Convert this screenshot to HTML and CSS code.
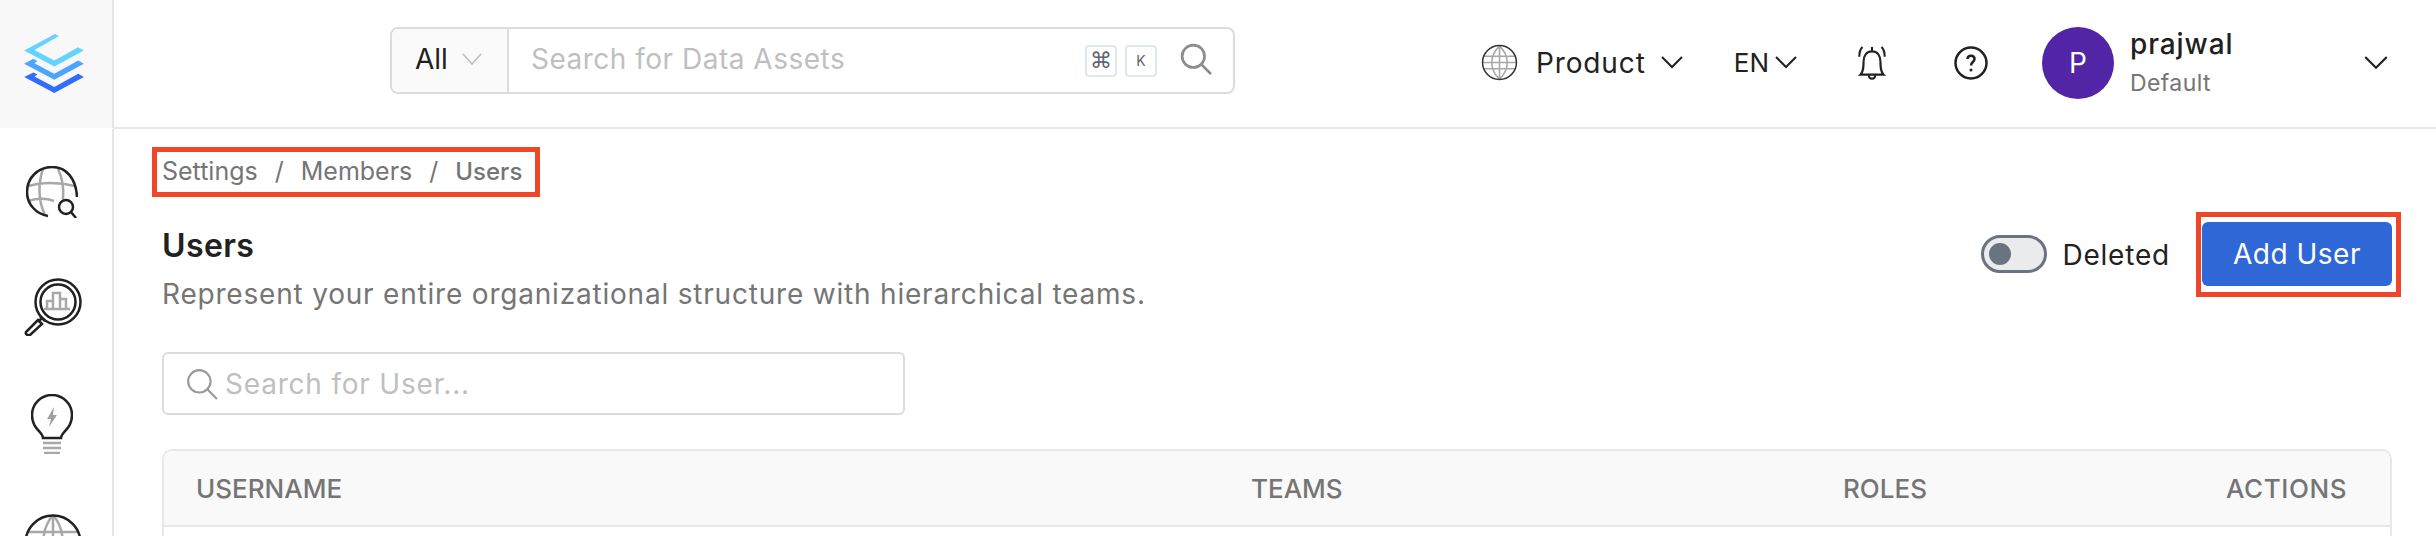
FILE: index.html
```html
<!DOCTYPE html>
<html lang="en">
<head>
    <meta charset="UTF-8">
    <meta name="viewport" content="width=device-width, initial-scale=1.0">
    <title>Users</title>
    <link rel="stylesheet" href="styles.css">
</head>
<body>
<div class="topbar">
    <div class="logo-cell">
        <svg class="logo" viewBox="0 0 180 190">
            <polygon fill="#2e6dff" points="0,130 28,116 40,122 31,128 91,160 163,120 180,130 91,178"/>
            <polygon fill="#4ba5ff" points="0,90 28,75 40,82 31,88 91,120 163,80 180,90 91,138"/>
            <polygon fill="#63d4ff" points="0,50 93,0 105,6 31,48 91,80 163,40 180,50 91,98"/>
        </svg>
    </div>
    <div class="header">
        <div class="global-search">
            <div class="scope">All
                <svg class="chev-thin" viewBox="0 0 20 12"><path d="M1 1l9 10 9-10"/></svg>
            </div>
            <div class="global-input">
                <span class="placeholder">Search for Data Assets</span>
                <span class="key key-cmd">&#8984;</span>
                <span class="key">K</span>
                <svg class="search-icon" viewBox="0 0 30 30"><circle cx="12.5" cy="12.5" r="10.5"/><path d="M20 20l9 9"/></svg>
            </div>
        </div>
        <div class="header-right">
            <div class="domain">
                <svg class="domain-globe" viewBox="0 0 36 36">
                    <g class="grey"><path d="M3 12h30M2 18h32M3 24h30M18 2v32M18 2c-10 9-10 23 0 32M18 2c10 9 10 23 0 32"/></g>
                    <circle cx="18" cy="18" r="16.5"/>
                </svg>
                <span>Product</span>
                <svg class="chev" viewBox="0 0 22 13"><path d="M1 1l10 10 10-10"/></svg>
            </div>
            <div class="lang">
                <span>EN</span>
                <svg class="chev" viewBox="0 0 22 13"><path d="M1 1l10 10 10-10"/></svg>
            </div>
            <svg class="bell" viewBox="0 0 32 34">
                <path d="M5 28c3-3 3-7 3-12 0-6 3-10 8-10s8 4 8 10c0 5 0 9 3 12zM13 28c0 5 6 5 6 0M16 2v4M7 2C5 4 4 7 4 11M25 2c2 2 3 5 3 9"/>
            </svg>
            <svg class="help" viewBox="0 0 34 34">
                <circle cx="17" cy="17" r="15.5"/>
                <path d="M13.500 13c0-4.500 7-4.500 7 0 0 3-3.500 3-3.500 6.500"/>
                <circle class="dot" cx="17" cy="24" r="1.500"/>
            </svg>
            <div class="user">
                <div class="avatar">P</div>
                <div class="user-text">
                    <div class="user-name">prajwal</div>
                    <div class="user-role">Default</div>
                </div>
                <svg class="chev user-chev" viewBox="0 0 22 13"><path d="M1 1l10 10 10-10"/></svg>
            </div>
        </div>
    </div>
</div>

<div class="page">
    <div class="sidebar">
        <svg class="side-icon globe-search" viewBox="0 0 52 52">
            <g class="grey"><path d="M3 20c12-4 30-4 46 0M2 35c10-3 18-3 26 0M17 3c-5 14-5 32 2 46M32 3c4 8 6 18 5 30"/></g>
            <path d="M22 50C10 48 1 38 1 26 1 12 12 1 26 1s24 11 25 30"/>
            <circle cx="40" cy="41" r="7"/>
            <path d="M45 46l5 6"/>
        </svg>
        <svg class="side-icon analytics" viewBox="0 0 58 58">
            <circle cx="34" cy="24" r="22.500"/>
            <circle cx="34" cy="24" r="17.500"/>
            <g class="grey"><path d="M23 31V23h6v8M29 31V15h7v16M36 31V21h6v10M20 31h26"/></g>
            <path d="M18 40l-4 4M16 38l5 5M14 42L2 54c-1 2 2 4 4 3l12-11z"/>
        </svg>
        <svg class="side-icon bulb" viewBox="0 0 42 60">
            <path d="M12 44c0-6-11-9-11-23C1 10 10 1 21 1s20 9 20 20c0 14-11 17-11 23z"/>
            <polygon class="grey-fill" points="23,13 16,25 20,25 18,33 26,21 22,21"/>
            <g class="grey"><path d="M12 49h18M12 54h18M13 59h16"/></g>
        </svg>
        <svg class="side-icon globe" viewBox="0 0 58 58">
            <g class="grey"><path d="M4 18h50M1 32h56M29 1v56M29 1C16 16 16 42 29 57M29 1c13 15 13 41 0 56"/></g>
            <circle cx="29" cy="29" r="27.500"/>
        </svg>
    </div>

    <div class="content">
        <div class="breadcrumb">
            <span>Settings</span><span class="sep">/</span><span>Members</span><span class="sep">/</span><span class="crumb-active">Users</span>
        </div>

        <div class="title-row">
            <div class="title-block">
                <div class="title">Users</div>
                <div class="subtitle">Represent your entire organizational structure with hierarchical teams.</div>
            </div>
            <div class="title-actions">
                <div class="toggle"><div class="knob"></div></div>
                <span class="toggle-label">Deleted</span>
                <div class="add-highlight"><button class="add-btn">Add User</button></div>
            </div>
        </div>

        <div class="user-search">
            <svg class="user-search-icon" viewBox="0 0 30 30"><circle cx="12.500" cy="12.500" r="10.500"/><path d="M20 20l9 9"/></svg>
            <span class="placeholder">Search for User...</span>
        </div>

        <div class="table">
            <div class="table-head">
                <div>USERNAME</div>
                <div>TEAMS</div>
                <div>ROLES</div>
                <div class="head-actions">ACTIONS</div>
            </div>
            <div class="table-body"></div>
        </div>
    </div>
</div>
</body>
</html>
```
FILE: styles.css
```css
* {
    box-sizing: border-box;
}

html, body {
    height: 100%;
}

body {
    margin: 0;
    overflow: hidden;
    background-color: #fff;
    color: #212121;
    font-family: 'Inter', 'Open Sans', sans-serif;
    font-size: 28px;
}

svg {
    display: block;
    flex: none;
    fill: none;
}

/* Top bar */
.topbar {
    display: flex;
    height: 129px;
}

.logo-cell {
    width: 114px;
    height: 128px;
    flex: none;
    display: flex;
    padding: 34px 0 0 24px;
    background-color: #f8f8f8;
    border-right: 2px solid #e6e6e6;
}

.logo {
    width: 60px;
    height: 63px;
}

.header {
    flex: 1;
    display: flex;
    align-items: center;
    padding: 0 48px 6px 276px;
    border-bottom: 2px solid #e6e6e6;
}

.global-search {
    display: flex;
    width: 845px;
    height: 67px;
    border: 2px solid #dcdcdc;
    border-radius: 8px;
    overflow: hidden;
}

.scope {
    width: 117px;
    display: flex;
    align-items: center;
    gap: 14px;
    padding: 0 0 3px 23px;
    background-color: #fafafa;
    border-right: 2px solid #dcdcdc;
}

.chev-thin {
    width: 20px;
    height: 12px;
    stroke: #bdbdbd;
    stroke-width: 1.500;
}

.global-input {
    flex: 1;
    display: flex;
    align-items: center;
    padding: 0 22px 0 22px;
}

.placeholder {
    color: #bfbfbf;
}

.global-input .placeholder {
    flex: 1;
    padding-bottom: 3px;
    letter-spacing: 0.5px;
}

.key {
    width: 32px;
    height: 32px;
    margin-left: 8px;
    display: flex;
    align-items: center;
    justify-content: center;
    border: 2px solid #e0e6ee;
    border-radius: 4px;
    color: #5d6475;
    font-size: 14px;
}

.key-cmd {
    font-family: 'DejaVu Sans', sans-serif;
    font-size: 22px;
}

.search-icon {
    width: 32px;
    height: 32px;
    margin: 0 -1px 3px 23px;
    stroke: #8c8c8c;
    stroke-width: 2.500;
}

.header-right {
    margin-left: auto;
    display: flex;
    align-items: center;
    padding-top: 4px;
}

.domain {
    display: flex;
    align-items: center;
    letter-spacing: 0.9px;
}

.domain-globe {
    width: 37px;
    height: 37px;
    margin-right: 18px;
    stroke: #333;
    stroke-width: 1.500;
}

.grey {
    stroke: #a8a8a8;
}

.grey-fill {
    fill: #a0a0a0;
    stroke: none;
}

.chev {
    width: 22px;
    height: 13px;
    stroke: #212121;
    stroke-width: 2;
}

.domain .chev {
    margin-left: 15px;
}

.lang {
    display: flex;
    align-items: center;
    gap: 6px;
    margin-left: 51px;
    font-size: 26px;
}

.bell {
    width: 34px;
    height: 36px;
    margin-left: 58px;
    stroke: #212121;
    stroke-width: 2;
}

.help {
    width: 34px;
    height: 34px;
    margin-left: 65px;
    stroke: #212121;
    stroke-width: 2.500;
}

.help .dot {
    fill: #212121;
    stroke: none;
}

.user {
    display: flex;
    align-items: center;
    margin-left: 54px;
}

.avatar {
    width: 72px;
    height: 72px;
    display: flex;
    align-items: center;
    justify-content: center;
    border-radius: 50%;
    background-color: #5125a5;
    color: #fff;
    font-size: 28px;
}

.user-text {
    width: 234px;
    margin-left: 16px;
}

.user-name {
    font-weight: 500;
    line-height: 38px;
    letter-spacing: 0.9px;
}

.user-role {
    margin-top: 3px;
    color: #757575;
    font-size: 23px;
    line-height: 34px;
    letter-spacing: 0.4px;
}

.user-chev {
    width: 24px;
    height: 14px;
}

/* Sidebar and page */
.page {
    display: flex;
    height: 407px;
}

.sidebar {
    width: 114px;
    flex: none;
    height: 100%;
    overflow: hidden;
    display: flex;
    flex-direction: column;
    padding: 37px 0 0 24px;
    background-color: #fff;
    border-right: 2px solid #e6e6e6;
}

.side-icon {
    stroke: #212121;
    stroke-width: 2.500;
}

.globe-search {
    width: 52px;
    height: 52px;
    margin-left: 2px;
}

.analytics {
    width: 58px;
    height: 58px;
    margin-top: 60px;
}

.bulb {
    width: 42px;
    height: 60px;
    margin: 58px 0 0 7px;
}

.globe {
    width: 58px;
    height: 58px;
    margin-top: 60px;
}

.content {
    flex: 1;
    min-width: 0;
    padding: 18px 44px 0 48px;
}

.breadcrumb {
    display: inline-flex;
    align-items: center;
    height: 50px;
    margin-left: -10px;
    padding: 0 13px 2px 5px;
    border: 5px solid #ee4628;
    color: #757575;
    font-size: 25px;
}

.sep {
    margin: 0 17px;
}

.crumb-active {
    font-weight: 500;
    font-size: 24px;
}

.title-row {
    display: flex;
    justify-content: space-between;
    margin-top: 15px;
}

.title-block {
    padding-top: 16px;
}

.title {
    font-size: 32px;
    font-weight: 600;
    line-height: 36px;
    letter-spacing: 0.4px;
}

.subtitle {
    margin-top: 10px;
    color: #757575;
    font-size: 28px;
    line-height: 40px;
    letter-spacing: 0.8px;
}

.title-actions {
    display: flex;
    align-items: center;
    margin-right: -9px;
    height: 85px;
}

.toggle {
    width: 66px;
    height: 38px;
    padding: 5px;
    margin-bottom: 1px;
    border: 3px solid #6b7280;
    border-radius: 19px;
    background-color: #e9ebed;
}

.knob {
    width: 22px;
    height: 22px;
    border-radius: 50%;
    background-color: #6b7280;
}

.toggle-label {
    margin-left: 15px;
    letter-spacing: 0.8px;
}

.add-highlight {
    margin-left: 26px;
    padding: 5px 4px 6px 1px;
    border: 5px solid #ee4628;
}

.add-btn {
    display: block;
    width: 190px;
    height: 64px;
    padding: 0;
    border: none;
    border-radius: 6px;
    background-color: #2f67d6;
    color: #fff;
    font-family: inherit;
    font-size: 28px;
    letter-spacing: 0.5px;
}

.user-search {
    display: flex;
    align-items: center;
    gap: 7px;
    width: 743px;
    height: 63px;
    margin-top: 38px;
    padding-left: 22px;
    border: 2px solid #dcdcdc;
    border-radius: 6px;
    letter-spacing: 0.8px;
}

.user-search-icon {
    width: 32px;
    height: 32px;
    stroke: #9a9a9a;
    stroke-width: 2;
}

.table {
    margin-top: 34px;
    border: 2px solid #e8e8e8;
    border-bottom: none;
    border-radius: 10px 10px 0 0;
    overflow: hidden;
}

.table-head {
    display: grid;
    grid-template-columns: 1055px 592px 383px 1fr;
    align-items: center;
    height: 76px;
    padding-left: 32px;
    background-color: #f9f9f9;
    border-bottom: 2px solid #e8e8e8;
    color: #757575;
    font-size: 26px;
    font-weight: 500;
}

.head-actions {
    letter-spacing: 0.6px;
}

.table-body {
    height: 60px;
    background-color: #fff;
}
```
